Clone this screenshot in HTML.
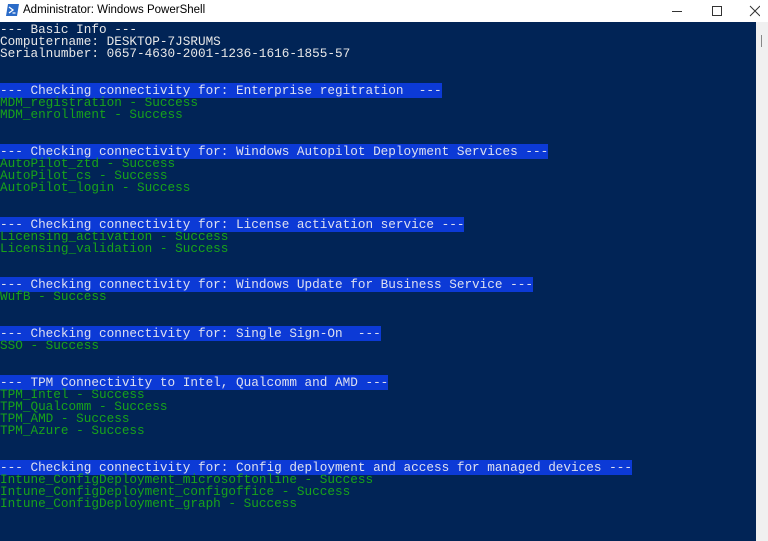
<!DOCTYPE html>
<html><head><meta charset="utf-8"><style>
html,body{margin:0;padding:0;width:768px;height:541px;overflow:hidden;background:#fff}
.title{position:absolute;left:0;top:0;width:768px;height:22px;background:#fff;font:11.5px "Liberation Sans",sans-serif;color:#000}
.title .t{position:absolute;left:23px;top:4px}
.con{position:absolute;left:0;top:22px;width:756px;height:519px;background:#012456;overflow:hidden}
.sb{position:absolute;left:756px;top:22px;width:12px;height:519px;background:#f0f0f0}
pre{margin:0;position:absolute;left:0;top:2px;font:12.7px/12.15px "Liberation Mono",monospace;color:#e8e8e8;white-space:pre}
.g{color:#18a31a}
.h{background:#0c3ad6;color:#dde0f0}
</style></head><body>
<div class="title">
<svg style="position:absolute;left:6px;top:4px" width="13" height="12" viewBox="0 0 13 12"><path d="M2 0H13L11 12H0Z" fill="#2a6bc8"/><path d="M3 3L7 6L3 9" stroke="#fff" stroke-width="1.3" fill="none"/><path d="M6.5 9H9.5" stroke="#fff" stroke-width="1.2"/></svg>
<span class="t">Administrator: Windows PowerShell</span>
<svg style="position:absolute;left:670px;top:5px" width="90" height="12" viewBox="0 0 90 12"><path d="M2 6.5H12" stroke="#333"/><path d="M42.5 1.5H51.5V10.5H42.5Z" stroke="#333" fill="none"/><path d="M80 1L90 11M90 1L80 11" stroke="#333"/></svg>
</div>
<div class="con"><pre>--- Basic Info ---
Computername: DESKTOP-7JSRUMS
Serialnumber: 0657-4630-2001-1236-1616-1855-57


<span class="h">--- Checking connectivity for: Enterprise regitration  ---</span>
<span class="g">MDM_registration - Success
MDM_enrollment - Success</span>


<span class="h">--- Checking connectivity for: Windows Autopilot Deployment Services ---</span>
<span class="g">AutoPilot_ztd - Success
AutoPilot_cs - Success
AutoPilot_login - Success</span>


<span class="h">--- Checking connectivity for: License activation service ---</span>
<span class="g">Licensing_activation - Success
Licensing_validation - Success</span>


<span class="h">--- Checking connectivity for: Windows Update for Business Service ---</span>
<span class="g">WufB - Success</span>


<span class="h">--- Checking connectivity for: Single Sign-On  ---</span>
<span class="g">SSO - Success</span>


<span class="h">--- TPM Connectivity to Intel, Qualcomm and AMD ---</span>
<span class="g">TPM_Intel - Success
TPM_Qualcomm - Success
TPM_AMD - Success
TPM_Azure - Success</span>


<span class="h">--- Checking connectivity for: Config deployment and access for managed devices ---</span>
<span class="g">Intune_ConfigDeployment_microsoftonline - Success
Intune_ConfigDeployment_configoffice - Success
Intune_ConfigDeployment_graph - Success</span></pre></div>
<div class="sb"><div style="position:absolute;left:5px;top:13px;width:1px;height:12px;background:#888"></div></div>
</body></html>
